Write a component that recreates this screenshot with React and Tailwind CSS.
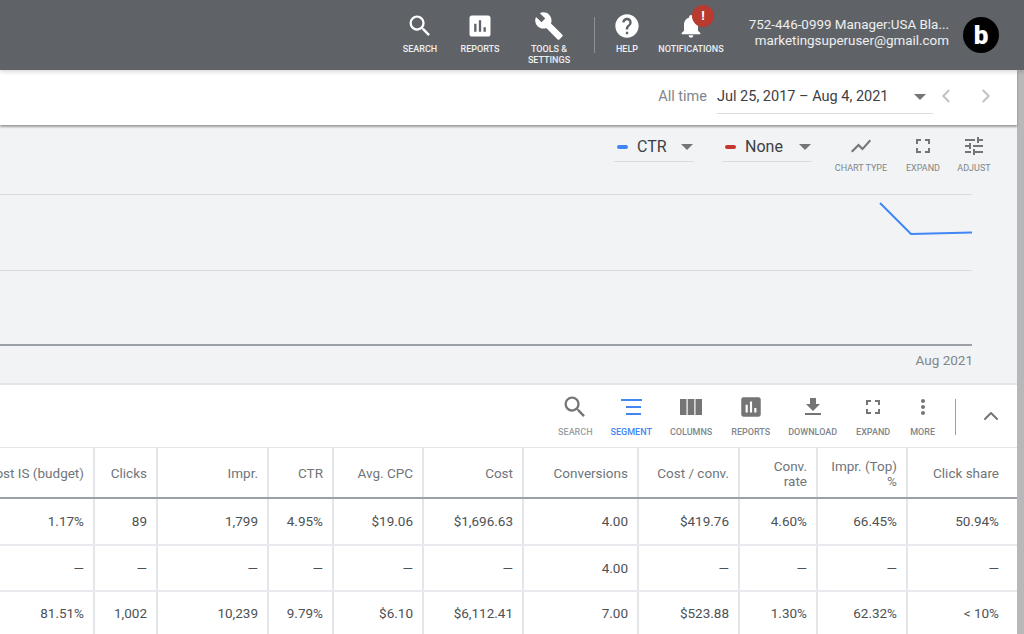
import { ChevronLeft, ChevronRight, ChevronUp } from 'lucide-react'

function SearchIcon({ size = 24 }) {
  return (
    <svg width={size} height={size} viewBox="0 0 24 24" fill="currentColor">
      <path d="M15.5 14h-.79l-.28-.27A6.47 6.47 0 0 0 16 9.5 6.5 6.5 0 1 0 9.5 16c1.61 0 3.09-.59 4.23-1.57l.27.28v.79l5 4.99L20.49 19l-4.99-5zm-6 0C7.01 14 5 11.99 5 9.5S7.01 5 9.5 5 14 7.01 14 9.5 11.99 14 9.5 14z" />
    </svg>
  )
}

function ReportsIcon({ size = 24 }) {
  return (
    <svg width={size} height={size} viewBox="0 0 24 24" fill="currentColor">
      <path d="M19 3H5c-1.1 0-2 .9-2 2v14c0 1.1.9 2 2 2h14c1.1 0 2-.9 2-2V5c0-1.1-.9-2-2-2zM9 17H7v-7h2v7zm4 0h-2V7h2v10zm4 0h-2v-4h2v4z" />
    </svg>
  )
}

function WrenchIcon() {
  return (
    <svg width="30" height="30" viewBox="0 0 24 24" fill="currentColor">
      <path d="M22.7 19l-9.1-9.1c.9-2.3.4-5-1.5-6.9-2-2-5-2.4-7.4-1.3L9 6 6 9 1.6 4.7C.4 7.1.9 10.1 2.9 12.1c1.9 1.9 4.6 2.4 6.9 1.5l9.1 9.1c.4.4 1 .4 1.4 0l2.3-2.3c.5-.4.5-1.1.1-1.4z" />
    </svg>
  )
}

function HelpIcon() {
  return (
    <svg width="28" height="28" viewBox="0 0 24 24" fill="currentColor">
      <path d="M12 2C6.48 2 2 6.48 2 12s4.48 10 10 10 10-4.48 10-10S17.52 2 12 2zm1 17h-2v-2h2v2zm2.07-7.75l-.9.92C13.45 12.9 13 13.5 13 15h-2v-.5c0-1.1.45-2.1 1.17-2.83l1.24-1.26c.37-.36.59-.86.59-1.41 0-1.1-.9-2-2-2s-2 .9-2 2H8c0-2.21 1.79-4 4-4s4 1.79 4 4c0 .88-.36 1.68-.93 2.25z" />
    </svg>
  )
}

function BellIcon() {
  return (
    <svg width="28" height="28" viewBox="0 0 24 24" fill="currentColor">
      <path d="M12 22c1.1 0 2-.9 2-2h-4c0 1.1.9 2 2 2zm6-6v-5c0-3.07-1.63-5.64-4.5-6.32V4c0-.83-.67-1.5-1.5-1.5s-1.5.67-1.5 1.5v.68C7.64 5.36 6 7.92 6 11v5l-2 2v1h16v-1l-2-2z" />
    </svg>
  )
}

function ExpandIcon() {
  return (
    <svg width="24" height="24" viewBox="0 0 24 24" fill="currentColor">
      <path d="M7 14H5v5h5v-2H7v-3zm-2-4h2V7h3V5H5v5zm12 7h-3v2h5v-5h-2v3zM14 5v2h3v3h2V5h-5z" />
    </svg>
  )
}

function Caret() {
  return <span className="block w-0 h-0 border-l-[6px] border-r-[6px] border-t-[6px] border-l-transparent border-r-transparent border-t-[#757575]" />
}

function TopItem({ label, second, icon, className }) {
  return (
    <div className={`flex flex-col items-center ${className}`}>
      <div className="h-[30px] flex items-center justify-center text-white">{icon}</div>
      <div className="mt-[3px] text-[9px] leading-[11px] font-medium text-white/90 text-center">
        {label}
        {second && <div>{second}</div>}
      </div>
    </div>
  )
}

function ToolItem({ label, icon, blue, light }) {
  return (
    <div className="flex flex-col items-center">
      <div className={`h-[28px] flex items-center justify-center ${blue ? 'text-[#4285f4]' : 'text-[#757575]'}`}>{icon}</div>
      <div className={`mt-[6px] text-[9px] leading-[11px] font-medium ${blue ? 'text-[#4285f4]' : light ? 'text-[#9aa0a6]' : 'text-[#80868b]'}`}>{label}</div>
    </div>
  )
}

function ChartControl({ label, icon, className }) {
  return (
    <div className={`flex flex-col items-center text-[#757575] ${className}`}>
      {icon}
      <span className="mt-[5px] text-[9px] leading-[11px] text-[#80868b] whitespace-nowrap">{label}</span>
    </div>
  )
}

const columns = [
  { w: 'w-[95px]', head: 'ost IS (budget)', vals: ['1.17%', '—', '81.51%'] },
  { w: 'w-[63px]', head: 'Clicks', vals: ['89', '—', '1,002'] },
  { w: 'w-[111px]', head: 'Impr.', vals: ['1,799', '—', '10,239'] },
  { w: 'w-[65px]', head: 'CTR', vals: ['4.95%', '—', '9.79%'] },
  { w: 'w-[90px]', head: 'Avg. CPC', vals: ['$19.06', '—', '$6.10'] },
  { w: 'w-[100px]', head: 'Cost', vals: ['$1,696.63', '—', '$6,112.41'] },
  { w: 'w-[115px]', head: 'Conversions', vals: ['4.00', '4.00', '7.00'] },
  { w: 'w-[101px]', head: 'Cost / conv.', vals: ['$419.76', '—', '$523.88'] },
  { w: 'w-[78px]', head: 'Conv.\nrate', vals: ['4.60%', '—', '1.30%'] },
  { w: 'w-[90px]', head: 'Impr. (Top)\n%', vals: ['66.45%', '—', '62.32%'] },
  { w: 'w-[109px]', head: 'Click share', vals: ['50.94%', '—', '< 10%'], last: true },
]

const rowHeights = ['h-[47px]', 'h-[46px]', 'h-[42px]']

export default function App() {
  return (
    <div className="w-[1024px] h-[634px] overflow-hidden bg-white font-['Roboto',sans-serif] flex flex-col">
      {/* Top bar */}
      <header className="h-[70px] shrink-0 bg-[#5f6368] flex items-start justify-end text-white relative z-20 shadow-[0_2px_4px_rgba(0,0,0,0.15)]">
        <div className="flex items-start pt-[11px]">
          <TopItem label="SEARCH" icon={<SearchIcon size={28} />} className="w-[36px]" />
          <TopItem label="REPORTS" icon={<ReportsIcon size={28} />} className="w-[40px] ml-[22px]" />
          <TopItem label="TOOLS &" second="SETTINGS" icon={<WrenchIcon />} className="w-[44px] ml-[27px]" />
          <div className="w-px h-[36px] bg-white/30 ml-[23px] mt-[6px]" />
          <TopItem label="HELP" icon={<HelpIcon />} className="w-[30px] ml-[17px]" />
          <div className="relative ml-[16px]">
            <TopItem label="NOTIFICATIONS" icon={<BellIcon />} className="w-[66px]" />
            <div className="absolute top-[-6px] left-[34px] w-[22px] h-[22px] rounded-full bg-[#b93a2e] flex items-center justify-center text-[13px] font-bold">!</div>
          </div>
          <div className="ml-[23px] w-[202px] text-right text-[13.4px] leading-[16px] pt-[6px] text-white/90 whitespace-nowrap">
            <div>752-446-0999 Manager:USA Bla...</div>
            <div>marketingsuperuser@gmail.com</div>
          </div>
        </div>
        <div className="ml-[14px] mr-[25px] mt-[17px] w-[36px] h-[36px] rounded-full bg-black flex items-center justify-center text-[26px] leading-none font-black text-white">b</div>
      </header>

      <div className="flex flex-1 min-h-0">
        <main className="flex-1 min-w-0 flex flex-col">
          {/* Date row */}
          <div className="h-[55px] shrink-0 bg-white flex items-start justify-end shadow-[0_2px_2px_rgba(0,0,0,0.35)] relative z-10">
            <span className="mt-[18px] text-[14.5px] leading-[18px] text-[#80868b]">All time</span>
            <div className="ml-[10px] mt-[7px] w-[216px] h-[37px] border-b border-[#dadce0] flex items-center justify-between pt-[3px] pr-[7px]">
              <span className="text-[14.5px] text-[#3c4043]">Jul 25, 2017 – Aug 4, 2021</span>
              <Caret />
            </div>
            <ChevronLeft className="ml-[2px] mt-[15px] text-[#bdc1c6]" size={22} />
            <ChevronRight className="ml-[18px] mr-[20px] mt-[15px] text-[#bdc1c6]" size={22} />
          </div>

          {/* Chart */}
          <section className="h-[258px] shrink-0 bg-[#f1f3f4] relative">
            <div className="flex justify-end items-start pt-[8px]">
              <div className="w-[80px] h-[29px] border-b border-[#dadce0] flex items-center pr-[1px]">
                <span className="ml-[3px] w-[11px] h-[4px] shrink-0 rounded-sm bg-[#4285f4]" />
                <span className="ml-[9px] text-[16px] text-[#3c4043]">CTR</span>
                <span className="ml-auto"><Caret /></span>
              </div>
              <div className="ml-[28px] w-[90px] h-[29px] border-b border-[#dadce0] flex items-center pr-[1px]">
                <span className="ml-[3px] w-[11px] h-[4px] shrink-0 rounded-sm bg-[#c5372c]" />
                <span className="ml-[9px] text-[16px] text-[#3c4043]">None</span>
                <span className="ml-auto"><Caret /></span>
              </div>
              <ChartControl
                label="CHART TYPE"
                className="ml-[22px] w-[54px] mt-[1px]"
                icon={<svg width="26" height="24" viewBox="0 0 24 24" fill="currentColor"><path d="M3.5 18.49l6-6.01 4 4L22 6.92l-1.41-1.41-7.09 7.97-4-4L2 16.99z" /></svg>}
              />
              <ChartControl label="EXPAND" className="ml-[18px] w-[34px] mt-[1px]" icon={<ExpandIcon />} />
              <ChartControl
                label="ADJUST"
                className="ml-[17px] mr-[26px] w-[34px] mt-[1px]"
                icon={<svg width="26" height="24" viewBox="0 0 24 24" fill="currentColor"><path d="M3 17v2h6v-2H3zM3 5v2h10V5H3zm10 16v-2h8v-2h-8v-2h-2v6h2zM7 9v2H3v2h4v2h2V9H7zm14 4v-2H11v2h10zm-6-4h2V7h4V5h-4V3h-2v6z" /></svg>}
              />
            </div>
            <div className="absolute left-0 top-[69px] w-[972px] h-px bg-[#dadce0]" />
            <div className="absolute left-0 top-[145px] w-[972px] h-px bg-[#dadce0]" />
            <div className="absolute left-0 top-[219px] w-[972px] h-[2px] bg-[#9aa0a6]" />
            <svg className="absolute left-[876px] top-[75px]" width="100" height="40" viewBox="0 0 100 40" fill="none">
              <path d="M4 3 L35 34 L96 32.5" stroke="#4285f4" strokeWidth="2" />
            </svg>
            <span className="absolute right-[44px] top-[226px] text-[13.5px] leading-[18px] text-[#80868b]">Aug 2021</span>
          </section>

          {/* Table toolbar */}
          <div className="h-[65px] shrink-0 bg-white border-t-2 border-b border-[#e3e5e8] flex items-start justify-end pt-[8px] pr-[14px]">
            <ToolItem label="SEARCH" light icon={<SearchIcon size={28} />} />
            <div className="ml-[18px]"><ToolItem label="SEGMENT" blue icon={<svg width="24" height="24" viewBox="0 0 24 24" fill="none" stroke="currentColor" strokeWidth="2"><path d="M2 5h21M7 12h15M7 19h15" /></svg>} /></div>
            <div className="ml-[18px]"><ToolItem label="COLUMNS" icon={<svg width="24" height="24" viewBox="0 0 24 24" fill="currentColor"><path d="M1 4h6.5v16H1zM8.7 4h6.6v16H8.7zM16.5 4H23v16h-6.5z" /></svg>} /></div>
            <div className="ml-[19px]"><ToolItem label="REPORTS" icon={<ReportsIcon size={26} />} /></div>
            <div className="ml-[18px]"><ToolItem label="DOWNLOAD" icon={<svg width="24" height="24" viewBox="0 0 24 24" fill="currentColor"><path d="M19 9h-4V3H9v6H5l7 7 7-7zM4 18v2h16v-2H4z" /></svg>} /></div>
            <div className="ml-[19px]"><ToolItem label="EXPAND" icon={<ExpandIcon />} /></div>
            <div className="ml-[20px]"><ToolItem label="MORE" icon={<svg width="24" height="24" viewBox="0 0 24 24" fill="currentColor"><path d="M12 8c1.1 0 2-.9 2-2s-.9-2-2-2-2 .9-2 2 .9 2 2 2zm0 2c-1.1 0-2 .9-2 2s.9 2 2 2 2-.9 2-2-.9-2-2-2zm0 6c-1.1 0-2 .9-2 2s.9 2 2 2 2-.9 2-2-.9-2-2-2z" /></svg>} /></div>
            <div className="ml-[20px] w-px h-[36px] mt-[6px] bg-[#9aa0a6]" />
            <ChevronUp className="ml-[23px] mt-[11px] text-[#757575]" size={24} />
          </div>

          {/* Table */}
          <div className="flex-1 min-h-0 flex bg-white overflow-hidden">
            {columns.map((col) => (
              <div key={col.head} className={`${col.w} shrink-0 flex flex-col ${col.last ? 'pr-[9px]' : 'border-r-2 border-[#e3e5e8]'}`}>
                <div className={`h-[51px] shrink-0 border-b-2 border-[#9aa0a6] pl-[4px] pt-[2px] flex items-center justify-end text-right text-[13.5px] leading-[15px] text-[#70757a] ${col.last ? '-mr-[9px] pr-[18px]' : '-mr-[2px] pr-[11px]'}`}>
                  <span className="whitespace-pre">{col.head}</span>
                </div>
                {col.vals.map((v, i) => (
                  <div key={i} className={`${rowHeights[i]} shrink-0 flex items-center justify-end text-[13.5px] text-[#4d5156] ${i < 2 ? 'border-b-2 border-[#e8eaed]' : ''} ${col.last ? '-mr-[9px] pr-[18px]' : '-mr-[2px] pr-[11px]'}`}>{v}</div>
                ))}
              </div>
            ))}
          </div>
        </main>
        <div className="w-[7px] shrink-0 bg-[#b8b8b8]" />
      </div>
    </div>
  )
}
